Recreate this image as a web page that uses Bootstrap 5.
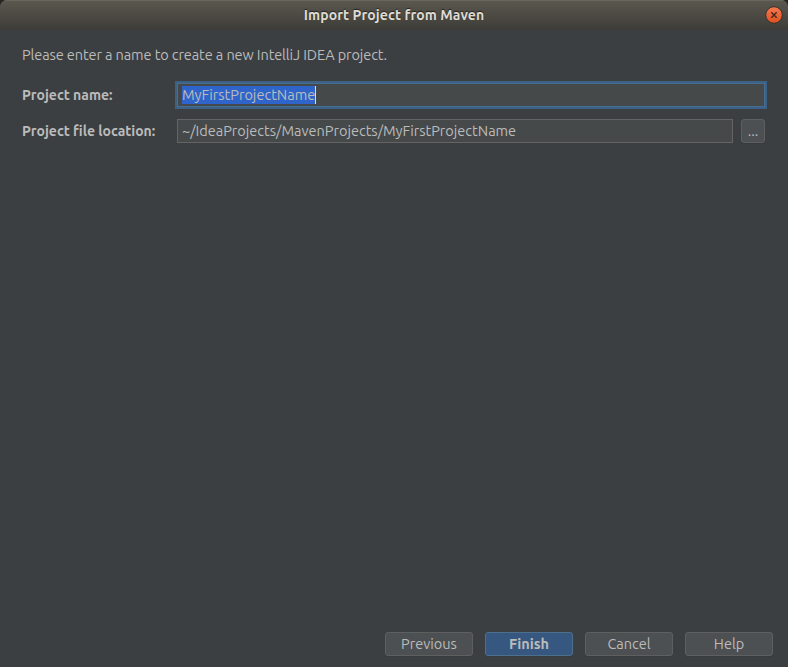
<!DOCTYPE html>
<html lang="en" data-bs-theme="dark">
<head>
<meta charset="utf-8">
<meta name="viewport" content="width=device-width, initial-scale=1">
<title>Import Project from Maven</title>
<link href="https://cdn.jsdelivr.net/npm/bootstrap@5.3.0/dist/css/bootstrap.min.css" rel="stylesheet">
<style>
body{background:#262521;font-family:Ubuntu,"Noto Sans",sans-serif;font-size:14.5px;line-height:18px;color:#bbb}
.dialog{background:#3c3f41;border-radius:7px 7px 0 0;overflow:hidden}
.titlebar{height:30px;background:linear-gradient(#5b584f,#3d3c37);box-shadow:inset 0 1px #69665d;color:#dfdbd2;text-shadow:0 -1px 1px #222}
.title-text{font-size:14px;letter-spacing:.1px}
.close-btn{right:5px;top:6px;width:18px;height:18px;line-height:0}
.form-area{padding:16px 23px 0 22px}
.intro{height:18px;margin-bottom:17px}
.field-row{height:28px}
.field-label{width:155px;font-size:14px}
.field{height:24px;border:1px solid #646464;border-radius:0;background:#45494a;padding:0 4px;color:#bbb}
.field-focus{border-color:#466d94;box-shadow:0 0 0 2px #3d6185}
.picked{background:#2f65ca;height:18px;border-right:1px solid #ddd}
.tool-btn{height:24px;border:1px solid #5e6060;border-radius:3px;background:#4c5052;color:#bbb;padding:0;font-size:14.5px;line-height:20px;box-shadow:0 1px #383b3d}
.browse{width:24px;margin-left:8px}
.action{width:88px}
.finish{background:#365880;border-color:#4c708c;font-weight:700}
.actions{gap:12px;padding:0 15px 11px}
.t-intro{letter-spacing:-.1px}
</style>
</head>
<body>
<div class="dialog vh-100 d-flex flex-column">
  <header class="titlebar position-relative d-flex align-items-center justify-content-center fw-bold flex-shrink-0">
    <span class="title-text" id="t1">Import Project from Maven</span>
    <button class="close-btn btn border-0 p-0 position-absolute" aria-label="Close">
      <svg width="18" height="18" viewBox="0 0 18 18"><defs><linearGradient id="g" x2="0" y2="1"><stop stop-color="#f67950"/><stop offset="1" stop-color="#e2501f"/></linearGradient></defs><circle cx="9" cy="9" r="8.3" fill="url(#g)" stroke="#35332e"/><path d="M6.3 6.3l5.4 5.4M11.7 6.3l-5.4 5.4" stroke="#442c20" stroke-width="1.5"/></svg>
    </button>
  </header>
  <main class="form-area flex-grow-1">
    <div class="intro"><span class="t-intro">Please enter a name to create a new IntelliJ IDEA project.</span></div>
    <div class="field-row d-flex align-items-center">
      <label class="field-label fw-bold"><span class="t-name">Project name:</span></label>
      <div class="field field-focus flex-grow-1 d-flex align-items-center"><span class="picked"><span class="t-value">MyFirstProjectName</span></span></div>
    </div>
    <div class="field-row d-flex align-items-center mt-2">
      <label class="field-label fw-bold"><span class="t-location">Project file location:</span></label>
      <div class="field flex-grow-1 d-flex align-items-center"><span class="t-path">~/IdeaProjects/MavenProjects/MyFirstProjectName</span></div>
      <button class="btn tool-btn browse">...</button>
    </div>
  </main>
  <footer class="actions d-flex justify-content-end">
    <button class="btn tool-btn action">Previous</button>
    <button class="btn tool-btn action finish">Finish</button>
    <button class="btn tool-btn action">Cancel</button>
    <button class="btn tool-btn action">Help</button>
  </footer>
</div>
<script src="https://cdn.jsdelivr.net/npm/bootstrap@5.3.0/dist/js/bootstrap.bundle.min.js"></script>
</body>
</html>
